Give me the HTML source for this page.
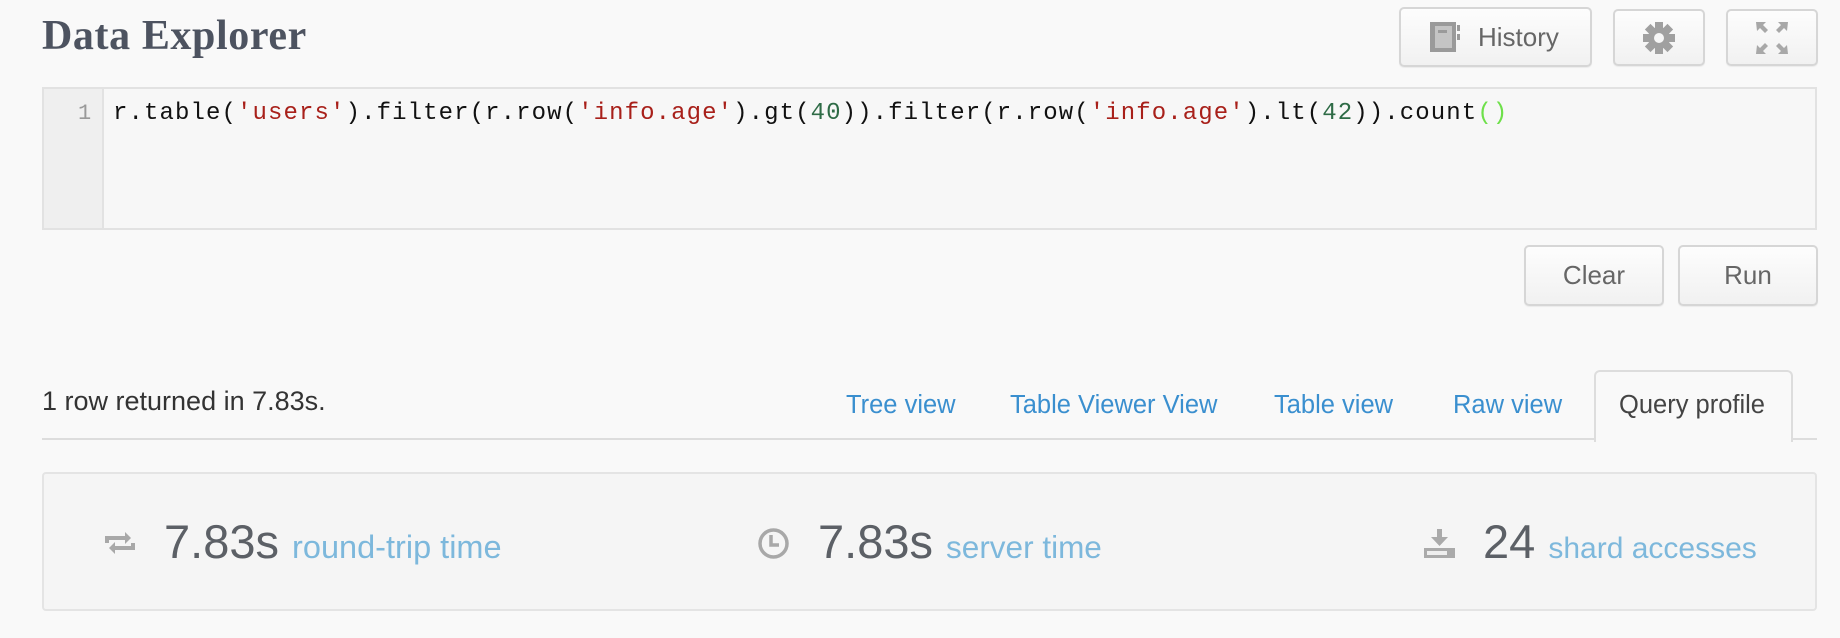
<!DOCTYPE html>
<html><head><meta charset="utf-8"><style>
body{margin:0;width:1840px;height:638px;background:#f9f9f9;font-family:"Liberation Sans",sans-serif;position:relative;overflow:hidden}
.a{position:absolute}
.btn{position:absolute;border:2px solid #d6d6d6;border-radius:5px;background:linear-gradient(#fdfdfd,#f1f1f1);box-sizing:border-box;color:#666;font-size:26px;display:flex;align-items:center;justify-content:center;box-shadow:0 1px 1px rgba(0,0,0,.06)}
.tab{position:absolute;top:391px;font-size:25.5px;color:#3a8fcf;white-space:nowrap}
.val{position:absolute;top:514px;font-size:47px;color:#5c6066;white-space:nowrap}
.lbl{font-size:31.5px;color:#7db8dc}
</style></head><body>
<div class="a" style="left:42px;top:12px;font-family:'Liberation Serif',serif;font-weight:bold;font-size:42px;color:#4d5360;letter-spacing:0.6px">Data Explorer</div>

<div class="btn" style="left:1399px;top:7px;width:193px;height:60px;justify-content:flex-start;padding-left:28px">
<svg width="32" height="32" viewBox="0 0 32 32" style="margin-right:17px"><rect x="1" y="1" width="26" height="30" fill="#9a9a9a"/><rect x="6" y="5" width="17" height="22" fill="#c4c4c4"/><rect x="9" y="9" width="9" height="3" fill="#9a9a9a"/><rect x="28" y="4" width="3" height="6" fill="#9a9a9a"/><rect x="28" y="13" width="3" height="6" fill="#9a9a9a"/></svg>History</div>
<div class="btn" style="left:1613px;top:9px;width:92px;height:57px">
<svg width="34" height="34" viewBox="0 0 34 34"><g fill="#a0a0a0" transform="translate(17 17)"><circle r="11"/><g id="t"><rect x="-4" y="-16" width="8" height="8"/></g><use href="#t" transform="rotate(45)"/><use href="#t" transform="rotate(90)"/><use href="#t" transform="rotate(135)"/><use href="#t" transform="rotate(180)"/><use href="#t" transform="rotate(225)"/><use href="#t" transform="rotate(270)"/><use href="#t" transform="rotate(315)"/></g><circle cx="17" cy="17" r="5" fill="#f6f6f6"/></svg></div>
<div class="btn" style="left:1726px;top:9px;width:92px;height:57px">
<svg width="34" height="34" viewBox="0 0 34 34" fill="#a8a8a8"><path d="M1 1h10l-3 3 5 5-3 3-5-5-3 3z"/><path d="M33 1h-10l3 3-5 5 3 3 5-5 3 3z"/><path d="M1 33h10l-3-3 5-5-3-3-5 5-3-3z"/><path d="M33 33h-10l3-3-5-5 3-3 5 5 3-3z"/></svg></div>

<div class="a" style="left:42px;top:87px;width:1775px;height:143px;border:2px solid #e2e2e2;box-sizing:border-box;background:#f7f7f7"></div>
<div class="a" style="left:44px;top:89px;width:58px;height:139px;background:#efefef;border-right:2px solid #e2e2e2"></div>
<div class="a" style="left:78px;top:101px;font-family:'Liberation Mono',monospace;font-size:22px;color:#999">1</div>
<div class="a" style="left:113px;top:100px;font-family:'Liberation Mono',monospace;font-size:24px;letter-spacing:1.1px;color:#111;white-space:pre">r.table(<span style="color:#a8201a">'users'</span>).filter(r.row(<span style="color:#a8201a">'info.age'</span>).gt(<span style="color:#2e6b46">40</span>)).filter(r.row(<span style="color:#a8201a">'info.age'</span>).lt(<span style="color:#2e6b46">42</span>)).count<span style="color:#6ee04a">()</span></div>

<div class="btn" style="left:1524px;top:245px;width:140px;height:61px">Clear</div>
<div class="btn" style="left:1678px;top:245px;width:140px;height:61px">Run</div>

<div class="a" style="left:42px;top:386px;font-size:27px;color:#333">1 row returned in 7.83s.</div>
<div class="a" style="left:42px;top:438px;width:1775px;height:2px;background:#ddd"></div>
<div class="a" style="left:1594px;top:370px;width:199px;height:72px;border:2px solid #ddd;border-bottom:none;border-radius:6px 6px 0 0;box-sizing:border-box;background:#f9f9f9"></div>
<div class="tab" style="left:846px">Tree view</div>
<div class="tab" style="left:1010px">Table Viewer View</div>
<div class="tab" style="left:1274px">Table view</div>
<div class="tab" style="left:1453px">Raw view</div>
<div class="tab" style="left:1619px;color:#444">Query profile</div>

<div class="a" style="left:42px;top:472px;width:1775px;height:139px;border:2px solid #e4e4e4;border-radius:4px;box-sizing:border-box;background:#f5f5f5"></div>
<svg class="a" style="left:103px;top:530px" width="34" height="26" viewBox="0 0 34 26" fill="none" stroke="#a8a8a8" stroke-width="4"><path d="M4 13V8h22"/><path d="M22 2l6 6-6 6" fill="#a8a8a8" stroke="none"/><path d="M30 13v5H8"/><path d="M12 12l-6 6 6 6z" fill="#a8a8a8" stroke="none"/></svg>
<div class="val" style="left:164px">7.83s <span class="lbl" style="font-size:32.5px">round-trip time</span></div>
<svg class="a" style="left:757px;top:527px" width="33" height="33" viewBox="0 0 33 33" fill="none" stroke="#a8a8a8" stroke-width="3.5"><circle cx="16.5" cy="16.5" r="13.5"/><path d="M14 8v10h8"/></svg>
<div class="val" style="left:818px">7.83s <span class="lbl">server time</span></div>
<svg class="a" style="left:1423px;top:527px" width="33" height="32" viewBox="0 0 33 32" fill="#aaa"><rect x="14" y="2" width="5" height="10"/><path d="M8 10h17l-8.5 9z"/><path d="M1 21h31v10H1z"/><rect x="4" y="24" width="20" height="4" fill="#eee"/></svg>
<div class="val" style="left:1483px">24 <span class="lbl" style="font-size:30px">shard accesses</span></div>
</body></html>
